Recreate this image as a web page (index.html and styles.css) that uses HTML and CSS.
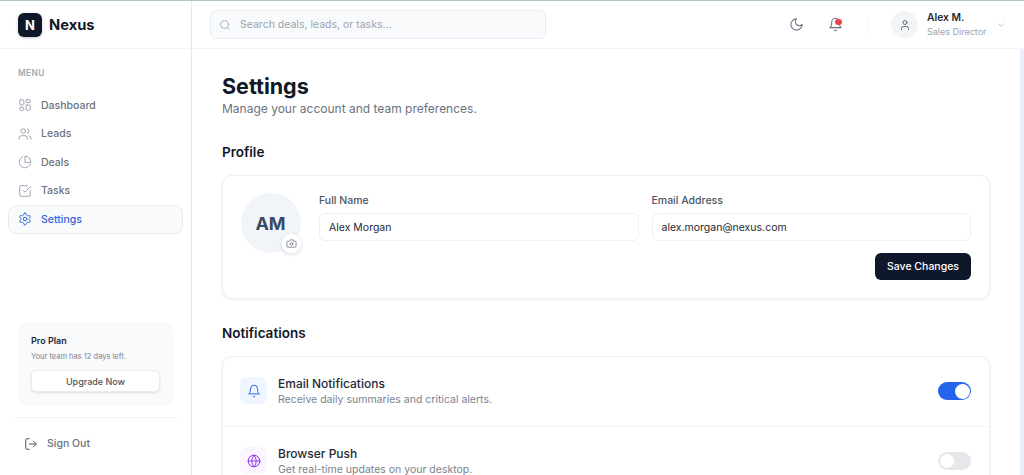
FILE: index.html
```html
<!DOCTYPE html>
<html lang="en">
<head>
    <meta charset="UTF-8">
    <meta name="viewport" content="width=device-width, initial-scale=1.0">
    <title>Nexus - Settings</title>
    <link rel="stylesheet" href="styles.css">
</head>
<body>
    <div class="app">
        <!-- Sidebar -->
        <aside class="sidebar">
            <div class="brand">
                <span class="brandMark">N</span>
                <span class="brandName">Nexus</span>
            </div>
            <nav class="menu">
                <p class="menuTitle">MENU</p>
                <a class="menuItem">
                    <svg class="icon" viewBox="0 0 24 24"><rect x="3" y="3" width="7" height="9" rx="1.5"/><rect x="14" y="3" width="7" height="5" rx="1.5"/><rect x="14" y="12" width="7" height="9" rx="1.5"/><rect x="3" y="16" width="7" height="5" rx="1.5"/></svg>
                    Dashboard
                </a>
                <a class="menuItem">
                    <svg class="icon" viewBox="0 0 24 24"><path d="M16 21v-2a4 4 0 0 0-4-4H6a4 4 0 0 0-4 4v2"/><circle cx="9" cy="7" r="4"/><path d="M22 21v-2a4 4 0 0 0-3-3.87"/><path d="M16 3.13a4 4 0 0 1 0 7.75"/></svg>
                    Leads
                </a>
                <a class="menuItem">
                    <svg class="icon" viewBox="0 0 24 24"><path d="M21.2 15.9A10 10 0 1 1 8 2.8"/><path d="M22 12A10 10 0 0 0 12 2v10z"/></svg>
                    Deals
                </a>
                <a class="menuItem">
                    <svg class="icon" viewBox="0 0 24 24"><path d="M21 11.5V19a2 2 0 0 1-2 2H5a2 2 0 0 1-2-2V5a2 2 0 0 1 2-2h11"/><path d="m9 11 3 3L22 4"/></svg>
                    Tasks
                </a>
                <a class="menuItem active">
                    <svg class="icon" viewBox="0 0 24 24"><path d="M12.2 2h-.4a2 2 0 0 0-2 2v.2a2 2 0 0 1-1 1.7l-.4.3a2 2 0 0 1-2 0l-.2-.1a2 2 0 0 0-2.7.7l-.2.4a2 2 0 0 0 .7 2.7l.2.1a2 2 0 0 1 1 1.7v.5a2 2 0 0 1-1 1.8l-.2.1a2 2 0 0 0-.7 2.7l.2.4a2 2 0 0 0 2.7.7l.2-.1a2 2 0 0 1 2 0l.4.3a2 2 0 0 1 1 1.7v.2a2 2 0 0 0 2 2h.4a2 2 0 0 0 2-2v-.2a2 2 0 0 1 1-1.7l.4-.3a2 2 0 0 1 2 0l.2.1a2 2 0 0 0 2.7-.7l.2-.4a2 2 0 0 0-.7-2.7l-.2-.1a2 2 0 0 1-1-1.8v-.5a2 2 0 0 1 1-1.7l.2-.1a2 2 0 0 0 .7-2.7l-.2-.4a2 2 0 0 0-2.7-.7l-.2.1a2 2 0 0 1-2 0l-.4-.3a2 2 0 0 1-1-1.7V4a2 2 0 0 0-2-2z"/><circle cx="12" cy="12" r="3"/></svg>
                    Settings
                </a>
            </nav>
            <div class="planCard">
                <p class="planName">Pro Plan</p>
                <p class="planNote">Your team has 12 days left.</p>
                <button class="upgradeBtn">Upgrade Now</button>
            </div>
            <div class="signOut">
                <svg class="icon" viewBox="0 0 24 24"><path d="M9 21H5a2 2 0 0 1-2-2V5a2 2 0 0 1 2-2h4"/><path d="m16 17 5-5-5-5"/><path d="M21 12H9"/></svg>
                Sign Out
            </div>
        </aside>

        <div class="content">
            <!-- Top bar -->
            <header class="topbar">
                <div class="search">
                    <svg class="icon" viewBox="0 0 24 24"><circle cx="11" cy="11" r="8"/><path d="m21 21-4.3-4.3"/></svg>
                    <span>Search deals, leads, or tasks...</span>
                </div>
                <div class="topActions">
                    <svg class="icon" viewBox="0 0 24 24"><path d="M12 3a6 6 0 0 0 9 9 9 9 0 1 1-9-9z"/></svg>
                    <span class="bell">
                        <svg class="icon" viewBox="0 0 24 24"><path d="M6 8a6 6 0 0 1 12 0c0 7 3 9 3 9H3s3-2 3-9"/><path d="M10.3 21a1.9 1.9 0 0 0 3.4 0"/></svg>
                        <i class="bellDot"></i>
                    </span>
                    <span class="divider"></span>
                    <div class="user">
                        <span class="userAvatar">
                            <svg class="icon" viewBox="0 0 24 24"><path d="M19 21v-2a4 4 0 0 0-4-4H9a4 4 0 0 0-4 4v2"/><circle cx="12" cy="7" r="4"/></svg>
                        </span>
                        <div class="userText">
                            <p class="userName">Alex M.</p>
                            <p class="userRole">Sales Director</p>
                        </div>
                        <svg class="icon chevron" viewBox="0 0 24 24"><path d="m6 9 6 6 6-6"/></svg>
                    </div>
                </div>
            </header>

            <main class="main">
                <h1>Settings</h1>
                <p class="subtitle">Manage your account and team preferences.</p>

                <h2>Profile</h2>
                <section class="card profileCard">
                    <div class="avatar">
                        AM
                        <span class="cameraBtn">
                            <svg class="icon" viewBox="0 0 24 24"><path d="M14.5 4h-5L7 7H4a2 2 0 0 0-2 2v9a2 2 0 0 0 2 2h16a2 2 0 0 0 2-2V9a2 2 0 0 0-2-2h-3z"/><circle cx="12" cy="13" r="3"/></svg>
                        </span>
                    </div>
                    <div class="profileForm">
                        <div class="fields">
                            <div class="field">
                                <label>Full Name</label>
                                <div class="input">Alex Morgan</div>
                            </div>
                            <div class="field">
                                <label>Email Address</label>
                                <div class="input">alex.morgan@nexus.com</div>
                            </div>
                        </div>
                        <button class="saveBtn">Save Changes</button>
                    </div>
                </section>

                <h2>Notifications</h2>
                <section class="card">
                    <div class="notifyRow">
                        <span class="notifyIcon blue">
                            <svg class="icon" viewBox="0 0 24 24"><path d="M6 8a6 6 0 0 1 12 0c0 7 3 9 3 9H3s3-2 3-9"/><path d="M10.3 21a1.9 1.9 0 0 0 3.4 0"/></svg>
                        </span>
                        <div class="notifyText">
                            <p class="notifyTitle">Email Notifications</p>
                            <p class="notifyNote">Receive daily summaries and critical alerts.</p>
                        </div>
                        <span class="toggle on"></span>
                    </div>
                    <div class="notifyRow">
                        <span class="notifyIcon purple">
                            <svg class="icon" viewBox="0 0 24 24"><circle cx="12" cy="12" r="10"/><path d="M12 2a14.5 14.5 0 0 0 0 20 14.5 14.5 0 0 0 0-20"/><path d="M2 12h20"/></svg>
                        </span>
                        <div class="notifyText">
                            <p class="notifyTitle">Browser Push</p>
                            <p class="notifyNote">Get real-time updates on your desktop.</p>
                        </div>
                        <span class="toggle"></span>
                    </div>
                </section>
            </main>
        </div>
    </div>
</body>
</html>
```

FILE: styles.css
```css
* {
    box-sizing: border-box;
}

html, body {
    height: 100%;
}

body {
    margin: 0;
    font-family: Inter, "Liberation Sans", sans-serif;
    color: #111827;
    background-color: #ffffff;
    overflow: hidden;
}

p, h1, h2 {
    margin: 0;
}

.app {
    display: flex;
    height: 100vh;
    border-top: 1px solid #b4c9be;
}

.icon {
    width: 16px;
    height: 16px;
    flex: none;
    fill: none;
    stroke: currentColor;
    stroke-width: 1.7;
    stroke-linecap: round;
    stroke-linejoin: round;
}

/* Sidebar */
.sidebar {
    width: 192px;
    flex: none;
    display: flex;
    flex-direction: column;
    border-right: 1px solid #e5e7eb;
}

.brand {
    height: 48px;
    flex: none;
    display: flex;
    align-items: center;
    gap: 7px;
    padding-left: 18px;
    border-bottom: 1px solid #f3f4f6;
}

.brandMark {
    width: 24px;
    height: 24px;
    display: flex;
    align-items: center;
    justify-content: center;
    background-color: #0f172a;
    border-radius: 6px;
    color: #ffffff;
    font-size: 13px;
    font-weight: 700;
    box-shadow: 0 1px 3px rgba(15, 23, 42, 0.25);
}

.brandName {
    font-size: 14.7px;
    font-weight: 700;
}

.menu {
    flex: 1;
    padding: 19px 8px 0;
}

.menuTitle {
    padding-left: 10px;
    margin-bottom: 13px;
    font-size: 8.3px;
    font-weight: 600;
    letter-spacing: 0.4px;
    line-height: 10px;
    color: #a3a9b5;
}

.menuItem {
    height: 28.5px;
    display: flex;
    align-items: center;
    gap: 9px;
    padding: 0 10px;
    font-size: 10.5px;
    font-weight: 500;
    color: #6b7280;
}

.menuItem .icon {
    width: 14px;
    height: 14px;
    color: #9ca3af;
}

.menuItem.active {
    background-color: #f8fafc;
    border: 1px solid #e8ecf1;
    border-radius: 8px;
    padding: 0 9px;
    color: #3168d6;
}

.menuItem.active .icon {
    color: #2f66d6;
}

.planCard {
    width: 155px;
    height: 84px;
    flex: none;
    margin: 0 0 11px 18px;
    padding: 13px;
    background-color: #f9fafb;
    border-radius: 10px;
}

.planName {
    font-size: 9px;
    font-weight: 600;
    line-height: 12px;
    color: #1f2937;
}

.planNote {
    margin-top: 4px;
    font-size: 7.5px;
    line-height: 11px;
    color: #7b8390;
}

.upgradeBtn {
    width: 100%;
    height: 22px;
    margin-top: 8px;
    background-color: #ffffff;
    border: 1px solid #e9ebef;
    border-radius: 5px;
    box-shadow: 0 1px 2px rgba(15, 23, 42, 0.12);
    font-family: inherit;
    font-size: 9px;
    font-weight: 500;
    color: #4b5563;
}

.signOut {
    height: 58px;
    flex: none;
    margin: 0 12px;
    display: flex;
    align-items: center;
    gap: 9px;
    padding-left: 12px;
    padding-bottom: 6px;
    border-top: 1px solid #f3f4f6;
    font-size: 10.5px;
    font-weight: 500;
    color: #6b7280;
}

.signOut .icon {
    width: 14px;
    height: 14px;
    color: #4b5563;
}

/* Top bar */
.content {
    flex: 1;
    min-width: 0;
    display: flex;
    flex-direction: column;
}

.topbar {
    height: 48px;
    flex: none;
    display: flex;
    align-items: center;
    justify-content: space-between;
    padding: 0 18px;
    border-bottom: 1px solid #f3f4f6;
}

.search {
    width: 336px;
    height: 29px;
    display: flex;
    align-items: center;
    gap: 9px;
    padding-left: 8px;
    background-color: #f9fafb;
    border: 1px solid #e8edf3;
    border-radius: 6px;
    font-size: 10.5px;
    color: #9ca3af;
}

.search .icon {
    width: 12px;
    height: 12px;
}

.topActions {
    display: flex;
    align-items: center;
    color: #6b7280;
}

.topActions > .icon {
    width: 15px;
    height: 15px;
}

.bell {
    position: relative;
    display: flex;
    margin-left: 24px;
    color: #6b7280;
}

.bell .icon {
    width: 15px;
    height: 15px;
}

.bellDot {
    position: absolute;
    top: 1.5px;
    right: 1.5px;
    width: 6.5px;
    height: 6.5px;
    background-color: #ef4444;
    border-radius: 50%;
}

.divider {
    width: 1px;
    height: 18px;
    margin: 0 23px 0 24px;
    background-color: #f3f4f6;
}

.user {
    display: flex;
    align-items: center;
}

.userAvatar {
    width: 27px;
    height: 27px;
    display: flex;
    align-items: center;
    justify-content: center;
    background-color: #f3f4f6;
    border-radius: 50%;
    color: #4b5563;
}

.userAvatar .icon {
    width: 12px;
    height: 12px;
}

.userText {
    width: 60px;
    margin-left: 9px;
}

.userName {
    font-size: 10.3px;
    font-weight: 600;
    line-height: 13px;
    color: #1f2937;
}

.userRole {
    margin-top: 2px;
    font-size: 9px;
    line-height: 12px;
    color: #9ca3af;
}

.chevron {
    width: 10px;
    height: 10px;
    margin-left: 9px;
    color: #9ca3af;
}

/* Main area */
.main {
    flex: 1;
    overflow: hidden;
    padding: 24px 30px 0;
    border-right: 4px solid #eaf0f8;
    background-color: #ffffff;
}

h1 {
    margin-top: -1px;
    margin-bottom: 1px;
    font-size: 21.5px;
    font-weight: 700;
    line-height: 28px;
}

.subtitle {
    font-size: 12px;
    line-height: 16px;
    color: #6b7280;
}

h2 {
    margin-top: 26px;
    margin-bottom: 14px;
    font-size: 13.5px;
    font-weight: 600;
    line-height: 18px;
}

.card + h2 {
    margin-top: 25px;
}

.card {
    background-color: #ffffff;
    border: 1px solid #eceff3;
    border-radius: 10px;
    box-shadow: 0 1px 3px rgba(15, 23, 42, 0.08);
}

.profileCard {
    display: flex;
    gap: 18.5px;
    padding: 17px 18px 18px 17.5px;
}

.avatar {
    position: relative;
    width: 60px;
    height: 60px;
    flex: none;
    display: flex;
    align-items: center;
    justify-content: center;
    background-color: #f1f5f9;
    border-radius: 50%;
    font-size: 18px;
    font-weight: 700;
    color: #3b4a60;
}

.cameraBtn {
    position: absolute;
    right: -1px;
    bottom: -1px;
    width: 21px;
    height: 21px;
    display: flex;
    align-items: center;
    justify-content: center;
    background-color: #ffffff;
    border: 1px solid #f3f4f6;
    border-radius: 50%;
    box-shadow: 0 1px 3px rgba(15, 23, 42, 0.15);
    color: #6b7280;
}

.cameraBtn .icon {
    width: 11px;
    height: 11px;
}

.profileForm {
    flex: 1;
    min-width: 0;
    padding-top: 1px;
    display: flex;
    flex-direction: column;
    align-items: flex-end;
}

.fields {
    width: 100%;
    display: grid;
    grid-template-columns: 1fr 1fr;
    gap: 13px;
}

.field label {
    display: block;
    margin-bottom: 5px;
    font-size: 10.5px;
    font-weight: 500;
    line-height: 14px;
    color: #4b5563;
}

.input {
    height: 28px;
    display: flex;
    align-items: center;
    padding-left: 9px;
    background-color: #ffffff;
    border: 1px solid #eef0f4;
    border-radius: 6px;
    font-size: 10.5px;
    color: #1f2937;
}

.saveBtn {
    width: 96px;
    height: 27px;
    margin-top: 12px;
    background-color: #0f172a;
    border: none;
    border-radius: 6px;
    font-family: inherit;
    font-size: 10.5px;
    font-weight: 500;
    color: #ffffff;
}

.notifyRow {
    height: 70px;
    display: flex;
    align-items: center;
    gap: 11px;
    padding: 0 18px 0 17px;
    border-bottom: 1px solid #f3f4f6;
}

.notifyIcon {
    width: 27px;
    height: 27px;
    margin-top: -2px;
    display: flex;
    align-items: center;
    justify-content: center;
    border-radius: 7px;
}

.notifyIcon .icon {
    width: 14px;
    height: 14px;
}

.notifyIcon.blue {
    background-color: #eff6ff;
    color: #2563eb;
}

.notifyIcon.purple {
    background-color: #faf5ff;
    color: #9333ea;
}

.notifyText {
    flex: 1;
}

.notifyTitle {
    font-size: 12px;
    font-weight: 500;
    line-height: 16px;
    color: #1f2937;
}

.notifyNote {
    font-size: 10.5px;
    line-height: 15px;
    color: #7b8390;
}

.toggle {
    position: relative;
    width: 33px;
    height: 18px;
    margin-top: -1px;
    background-color: #e5e7eb;
    border-radius: 9px;
}

.toggle::after {
    content: "";
    position: absolute;
    top: 2px;
    left: 2px;
    width: 14px;
    height: 14px;
    background-color: #ffffff;
    border-radius: 50%;
}

.toggle.on {
    background-color: #2563eb;
}

.toggle.on::after {
    top: 1.5px;
    left: 16.5px;
    width: 15px;
    height: 15px;
}
```
